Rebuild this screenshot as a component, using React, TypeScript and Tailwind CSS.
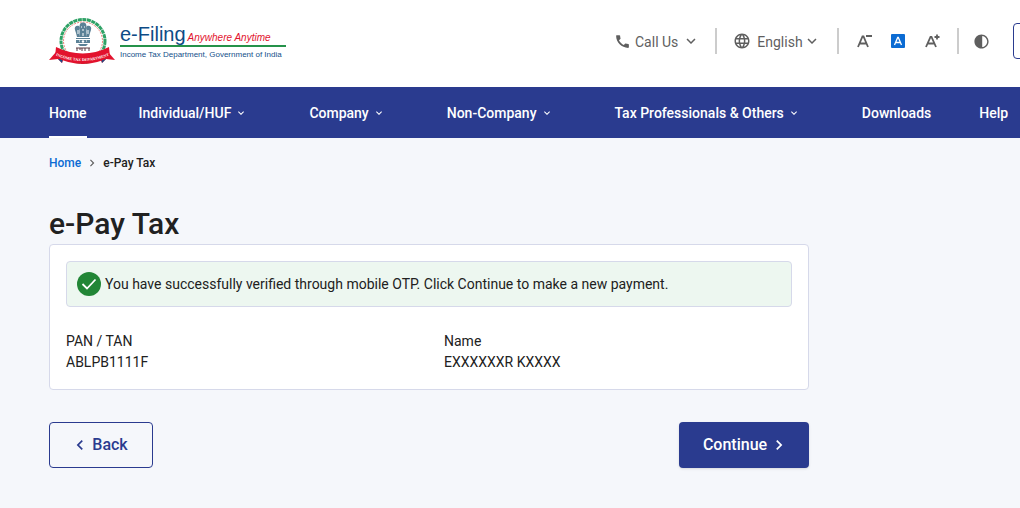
import {
  MdCall,
  MdChevronLeft,
  MdChevronRight,
  MdContrast,
  MdKeyboardArrowDown,
  MdLanguage,
} from "react-icons/md";

const navItems = [
  { label: "Home", active: true },
  { label: "Individual/HUF", menu: true },
  { label: "Company", menu: true },
  { label: "Non-Company", menu: true },
  { label: "Tax Professionals & Others", menu: true },
  { label: "Downloads" },
  { label: "Help" },
];

const Emblem = () => (
  <svg viewBox="0 0 66 50" className="w-[66px] h-[50px] shrink-0" aria-hidden="true">
    {/* Laurel ring */}
    <ellipse cx="34" cy="25" rx="22" ry="21.500" fill="#fff" stroke="#2fa266" strokeWidth="3" strokeDasharray="4 .6" />
    <ellipse cx="34" cy="25" rx="19.500" ry="19" fill="none" stroke="#e8857c" strokeWidth="1" strokeDasharray="2 1" />

    {/* Lion capital */}
    <g fill="#5b8196">
      <path d="M31 8c1-2 5-2 6 0l1 4-1 4h-6l-1-4z" />
      <path d="M30 10c-3-1-5 1-4 4l1 3 1 4h3l-1-9zM38 10c3-1 5 1 4 4l-1 3-1 4h-3l1-9z" />
      <path d="M31 16h6v5h-6z" />
      <path d="M27 22h14v1H27zM27 24h14v3H27z" />
      <path d="M29 28h10l-2 2h-6z" />
    </g>
    <path d="M32 11h1M35 11h1M33 14h2M29 14v4M39 14v4M34 17v3M30 25h1M37 25h1" stroke="#fff" strokeWidth="1" />
    <circle cx="34" cy="25.500" r="1.200" fill="#fff" />
    <path d="M27 32h14M28 32v3M31 32v2M33 32v3M36 32v3M40 32v3" stroke="#5a3a42" strokeWidth="1" fill="none" />

    {/* Ribbon */}
    <path d="M7 36l-7 8 9-1 4 4 3-8zM59 36l7 8-9-1-4 4-3-8z" fill="#e2122d" />
    <path d="M9 43l4 4 1-5zM57 43l-4 4-1-5z" fill="#174a86" />
    <path d="M7 31q27 13 53 0l1 10q-27 14-55 0z" fill="#e2122d" />
    <path id="ribbon-line" d="M3 38q30 14 61 0" fill="none" />
    <text fill="#fff" fontSize="4" fontWeight="700" className="font-['Liberation_Serif',serif]">
      <textPath href="#ribbon-line" startOffset="50%" textAnchor="middle">
        INCOME TAX DEPARTMENT
      </textPath>
    </text>
  </svg>
);

const Divider = () => <div className="w-0.5 h-[26px] shrink-0 bg-[#cccccc]" />;

const Header = () => (
  <header className="flex items-start bg-white h-[87px] pl-[49px] overflow-hidden whitespace-nowrap">
    {/* Logo */}
    <a href="#" className="flex items-start gap-[5px] pt-4 w-[240px] shrink-0">
      <Emblem />
      <div className="shrink-0 pt-1 w-[166px] font-['Liberation_Sans',sans-serif]">
        <div className="flex items-baseline gap-0.5 h-[27px] border-b-2 border-[#25924a]">
          <span className="text-xl leading-7 text-[#0d4b86]">e-Filing</span>
          <span className="text-[10px] italic text-[#e2122d]">Anywhere Anytime</span>
        </div>
        <div className="text-[8px] leading-4 text-[#14508a]">
          Income Tax Department, Government of India
        </div>
      </div>
    </a>

    {/* Tools */}
    <div className="flex items-center shrink-0 pt-7 ml-[325px] text-sm text-[#5f5f5f]">
      <button type="button" className="flex items-center mr-[15px]">
        <MdCall size={17} />
        <span className="ml-1 mr-1 pt-0.5">Call Us</span>
        <MdKeyboardArrowDown size={18} />
      </button>
      <Divider />
      <button type="button" className="flex items-center ml-4 mr-4">
        <MdLanguage size={18} />
        <span className="ml-1.5 pt-0.5">English</span>
        <MdKeyboardArrowDown size={18} />
      </button>
      <Divider />
      <button type="button" aria-label="Decrease text size" className="flex ml-[18px]">
        <svg viewBox="0 0 16 16" className="size-4" fill="none" stroke="currentColor" strokeWidth="1.800">
          <path d="M1 14L5.500 3.500h1L11 14M3 10.500h6M9 3h6" />
        </svg>
      </button>
      <button type="button" aria-label="Default text size" className="flex ml-[18px]">
        <svg viewBox="0 0 14 14" className="size-3.5" fill="none">
          <rect width="14" height="14" rx="1" fill="#0b6bd3" />
          <path d="M3.500 11L6.700 3.500h.6L10.500 11M4.800 8.500h4.400" stroke="#fff" strokeWidth="1.300" />
        </svg>
      </button>
      <button type="button" aria-label="Increase text size" className="flex ml-5 mr-4">
        <svg viewBox="0 0 16 16" className="size-4" fill="none" stroke="currentColor" strokeWidth="1.800">
          <path d="M1 14L5.500 4h1L11 14M3 10.500h6M9.500 4h5M12 1.500v5" />
        </svg>
      </button>
      <Divider />
      <button type="button" aria-label="Contrast" className="ml-3.5">
        <MdContrast size={17} />
      </button>
    </div>
    <button
      type="button"
      aria-label="Login"
      className="w-24 h-9 shrink-0 mt-[23px] ml-[23px] border border-[#2a3b8f] rounded"
    />
  </header>
);

const App = () => {
  return (
    <div className="min-h-screen bg-[#f5f7fb] text-[#212121] font-[Roboto,sans-serif]">
      <Header />

      {/* Main navigation */}
      <nav className="flex h-[51px] pl-[49px] gap-12 bg-[#2a3b8f] overflow-hidden whitespace-nowrap text-sm font-medium text-white">
        {navItems.map((item) => (
          <a
            key={item.label}
            href="#"
            className={`flex items-center shrink-0 border-b-2 pt-0.5 ${item.active ? "mr-1 border-white" : "border-transparent"}`}
          >
            {item.label}
            {item.menu && <MdKeyboardArrowDown size={12} className="ml-1 mr-3.5" />}
          </a>
        ))}
      </nav>

      <main className="pl-[49px] pr-4 pt-4 pb-10">
        {/* Breadcrumb */}
        <div className="flex items-center text-xs leading-[18px] font-medium">
          <a href="#" className="text-[#0b6bd3]">Home</a>
          <MdChevronRight size={14} className="mx-1 text-[#5f5f5f]" />
          <span>e-Pay Tax</span>
        </div>

        <div className="max-w-[760px] mt-8">
          <h1 className="text-[30px] leading-10 font-medium">e-Pay Tax</h1>

          {/* Verification card */}
          <section className="bg-white border border-[#d6d9ea] rounded p-4">
            <div className="flex items-center h-[46px] px-2.5 bg-[#edf7f0] border border-[#d6d9ea] rounded-sm text-sm">
              <svg viewBox="0 0 24 24" className="size-6 shrink-0" fill="none" aria-hidden="true">
                <circle cx="12" cy="12" r="12" fill="#228636" />
                <path d="M5.500 12l4.500 4.500 8.500-9" stroke="#fff" strokeWidth="1.800" />
              </svg>
              <p className="ml-1">
                You have successfully verified through mobile OTP. Click Continue to make a new payment.
              </p>
            </div>

            <dl className="grid grid-cols-2 gap-[30px] mt-6 text-sm leading-[21px]">
              <div>
                <dt>PAN / TAN</dt>
                <dd>ABLPB1111F</dd>
              </div>
              <div>
                <dt>Name</dt>
                <dd>EXXXXXXR KXXXX</dd>
              </div>
            </dl>
          </section>

          {/* Actions */}
          <div className="flex justify-between mt-8 font-medium">
            <button
              type="button"
              className="flex items-center justify-center gap-0.5 w-[104px] h-[46px] pr-1 border border-[#2a3b8f] rounded text-[#2a3b8f]"
            >
              <MdChevronLeft size={20} />
              Back
            </button>
            <button
              type="button"
              className="flex items-center justify-center gap-0.5 w-[130px] h-[46px] pl-1 rounded bg-[#2a3b8f] text-white shadow-sm"
            >
              Continue
              <MdChevronRight size={20} />
            </button>
          </div>
        </div>
      </main>
    </div>
  );
};

export default App;
